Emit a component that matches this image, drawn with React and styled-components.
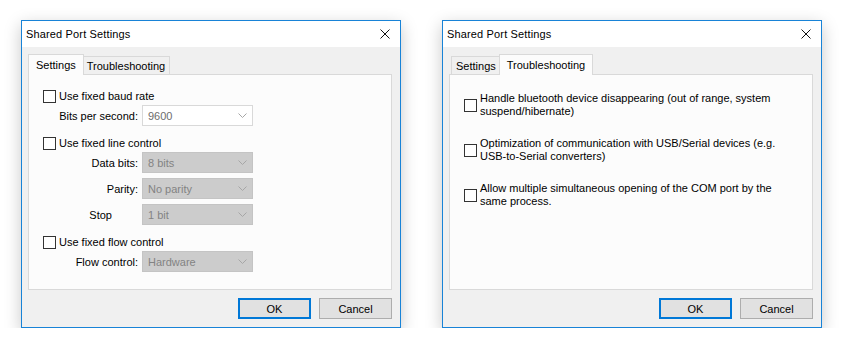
import styled, { createGlobalStyle } from "styled-components";

const GlobalStyle = createGlobalStyle`
  body {
    margin: 0;
    background: #fff;
    font-family: "Liberation Sans", Arial, sans-serif;
    font-size: 11px;
    color: #000;
  }
`;

const Page = styled.div`
  display: flex;
  gap: 41px;
  padding: 20px 0 0 21px;
`;

const Window = styled.div`
  width: 380px;
  height: 308px;
  box-sizing: border-box;
  border: 1px solid #1883d7;
  display: flex;
  flex-direction: column;
  background: #f0f0f0;
  box-shadow: 0 5px 16px rgba(0, 0, 0, 0.22);
`;

const TitleBar = styled.div`
  height: 26px;
  flex: none;
  background: #fff;
  display: flex;
  align-items: center;
  justify-content: space-between;
  padding: 0 10px 0 4px;
  letter-spacing: 0.15px;
`;

const Body = styled.div`
  flex: 1;
  display: flex;
  flex-direction: column;
  padding: 7px 8px 8px 6px;
`;

const TabStrip = styled.div`
  display: flex;
  align-items: flex-end;
  height: 20px;
  padding-left: 2px;
  position: relative;
  z-index: 1;
`;

const Tab = styled.div`
  box-sizing: border-box;
  border: 1px solid #d9d9d9;
  border-bottom: none;
  display: flex;
  align-items: center;
  white-space: nowrap;
  height: ${(p) => (p.$active ? "21px" : "18px")};
  padding: ${(p) => (p.$active ? "0 7px 1px" : "0 4px")};
  margin: ${(p) => (p.$active ? "0 -2px -1px" : "0")};
  background: ${(p) => (p.$active ? "#fcfcfc" : "#f0f0f0")};
  position: relative;
  z-index: ${(p) => (p.$active ? 2 : 1)};
`;

const Panel = styled.div`
  height: 216px;
  flex: none;
  box-sizing: border-box;
  border: 1px solid #d9d9d9;
  background: #fcfcfc;
`;

const SettingsPane = styled.div`
  display: flex;
  flex-direction: column;
  gap: 11px;
  padding: 15px 0 0 14px;
`;

const Group = styled.div`
  display: flex;
  flex-direction: column;
`;

const Fields = styled.div`
  display: flex;
  flex-direction: column;
  gap: 5px;
  margin-top: 2px;
`;

const CheckRow = styled.label`
  display: flex;
  align-items: center;
  gap: 3px;
  line-height: 13px;
  white-space: nowrap;
`;

const Box = styled.span`
  width: 13px;
  height: 13px;
  flex: none;
  box-sizing: border-box;
  border: 1px solid #333;
  background: #fff;
`;

const FieldRow = styled.div`
  display: grid;
  grid-template-columns: 95px 111px;
  column-gap: 4px;
  align-items: center;
`;

const FieldLabel = styled.span`
  text-align: right;
  padding-right: ${(p) => p.$pad || 0}px;
`;

const Combo = styled.div`
  height: 21px;
  box-sizing: border-box;
  display: flex;
  align-items: center;
  justify-content: space-between;
  padding: 0 5px 0 5px;
  border: 1px solid ${(p) => (p.$disabled ? "#c4c4c4" : "#d9d9d9")};
  background: ${(p) => (p.$disabled ? "#cccccc" : "#fff")};
  color: ${(p) => (p.$disabled ? "#838383" : "#6d6d6d")};
`;

const TroublePane = styled.div`
  display: flex;
  flex-direction: column;
  gap: 19px;
  padding: 17px 0 0 14px;
`;

const Option = styled.label`
  display: flex;
  align-items: center;
  gap: 3px;
  line-height: 13px;
  white-space: nowrap;
`;

const ButtonRow = styled.div`
  display: flex;
  justify-content: flex-end;
  gap: 8px;
  margin-top: 8px;
`;

const Button = styled.button`
  width: 73px;
  height: 21px;
  box-sizing: border-box;
  padding: 0;
  background: #e1e1e1;
  border: ${(p) => (p.$default ? "2px solid #0078d7" : "1px solid #adadad")};
  font: inherit;
  color: #000;
`;

function CloseIcon() {
  return (
    <svg width="10" height="10" viewBox="0 0 10 10">
      <path d="M0.5 0.5L9.5 9.5M9.5 0.5L0.5 9.5" stroke="#111" strokeWidth="1" />
    </svg>
  );
}

function Chevron() {
  return (
    <svg width="9" height="5" viewBox="0 0 9 5">
      <polyline points="0.5,0.5 4.5,4.5 8.5,0.5" fill="none" stroke="#a6a6a6" strokeWidth="1" />
    </svg>
  );
}

function Select({ value, disabled }) {
  return (
    <Combo $disabled={disabled}>
      <span>{value}</span>
      <Chevron />
    </Combo>
  );
}

function Field({ label, value, disabled, pad }) {
  return (
    <FieldRow>
      <FieldLabel $pad={pad}>{label}</FieldLabel>
      <Select value={value} disabled={disabled} />
    </FieldRow>
  );
}

function Check({ children }) {
  return (
    <CheckRow>
      <Box />
      <span>{children}</span>
    </CheckRow>
  );
}

function Dialog({ active, children }) {
  return (
    <Window>
      <TitleBar>
        <span>Shared Port Settings</span>
        <CloseIcon />
      </TitleBar>
      <Body>
        <TabStrip>
          <Tab $active={active === "settings"}>Settings</Tab>
          <Tab $active={active === "trouble"}>Troubleshooting</Tab>
        </TabStrip>
        <Panel>{children}</Panel>
        <ButtonRow>
          <Button $default>OK</Button>
          <Button>Cancel</Button>
        </ButtonRow>
      </Body>
    </Window>
  );
}

export default function App() {
  return (
    <>
      <GlobalStyle />
      <Page>
        <Dialog active="settings">
          <SettingsPane>
            <Group>
              <Check>Use fixed baud rate</Check>
              <Fields>
                <Field label="Bits per second:" value="9600" />
              </Fields>
            </Group>
            <Group>
              <Check>Use fixed line control</Check>
              <Fields>
                <Field label="Data bits:" value="8 bits" disabled />
                <Field label="Parity:" value="No parity" disabled />
                <Field label="Stop" value="1 bit" disabled pad={26} />
              </Fields>
            </Group>
            <Group>
              <Check>Use fixed flow control</Check>
              <Fields>
                <Field label="Flow control:" value="Hardware" disabled />
              </Fields>
            </Group>
          </SettingsPane>
        </Dialog>
        <Dialog active="trouble">
          <TroublePane>
            <Option>
              <Box />
              <span>
                Handle bluetooth device disappearing (out of range, system
                <br />
                suspend/hibernate)
              </span>
            </Option>
            <Option>
              <Box />
              <span>
                Optimization of communication with USB/Serial devices (e.g.
                <br />
                USB-to-Serial converters)
              </span>
            </Option>
            <Option>
              <Box />
              <span>
                Allow multiple simultaneous opening of the COM port by the
                <br />
                same process.
              </span>
            </Option>
          </TroublePane>
        </Dialog>
      </Page>
    </>
  );
}
